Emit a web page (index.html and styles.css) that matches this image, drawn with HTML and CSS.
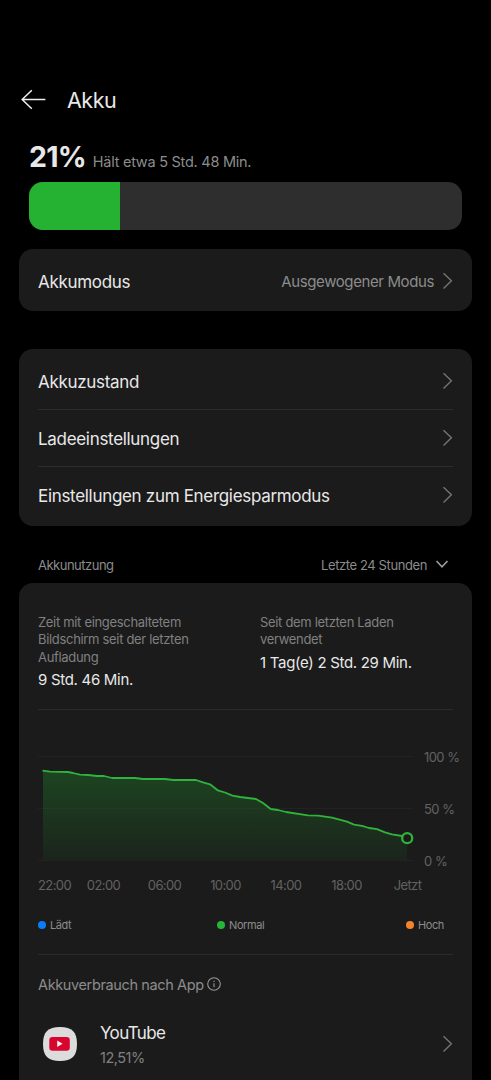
FILE: index.html
```html
<!DOCTYPE html>
<html lang="de">
<head>
  <meta charset="UTF-8" />
  <meta name="viewport" content="width=device-width, initial-scale=1.0"/>
  <title>Akku</title>
  <link rel="stylesheet" href="styles.css">
</head>
<body>
  <svg width="0" height="0" class="defs">
    <symbol id="chevron" viewBox="0 0 12 18">
      <path d="M2.5 1.2 L10.4 8.8 L2.5 16.4" fill="none" stroke="#747474" stroke-width="1.4"/>
    </symbol>
  </svg>

  <header class="header">
    <svg class="back" width="26" height="22" viewBox="0 0 26 22" fill="none" stroke="#eee" stroke-width="1.5">
      <path d="M11.8 1.3 L2.2 10.5 L11.8 19.7 M2.2 10.5 H25.4"/>
    </svg>
    <h1 class="title">Akku</h1>
  </header>

  <section class="level">
    <div class="level-text">
      <span class="percent">21%</span>
      <span class="remaining">Hält etwa 5 Std. 48 Min.</span>
    </div>
    <div class="bar"><div class="bar-fill" style="width: 21%"></div></div>
  </section>

  <section class="card mode">
    <div class="row">
      <span class="label">Akkumodus</span>
      <span class="value">Ausgewogener Modus</span>
      <svg class="chevron"><use href="#chevron"/></svg>
    </div>
  </section>

  <section class="card settings">
    <div class="row">
      <span class="label">Akkuzustand</span>
      <svg class="chevron"><use href="#chevron"/></svg>
    </div>
    <div class="row">
      <span class="label">Ladeeinstellungen</span>
      <svg class="chevron"><use href="#chevron"/></svg>
    </div>
    <div class="row">
      <span class="label">Einstellungen zum Energiesparmodus</span>
      <svg class="chevron"><use href="#chevron"/></svg>
    </div>
  </section>

  <div class="usage-head">
    <span class="usage-title">Akkunutzung</span>
    <span class="usage-range">Letzte 24 Stunden</span>
    <svg width="14" height="10" viewBox="0 0 14 10" fill="none" stroke="#9a9a9a" stroke-width="1.7">
      <path d="M1.5 1 L7 6.8 L12.5 1"/>
    </svg>
  </div>

  <section class="card usage">
    <div class="stats">
      <div class="stat">
        <p class="stat-label">Zeit mit eingeschaltetem<br>Bildschirm seit der letzten<br>Aufladung</p>
        <p class="stat-value">9 Std. 46 Min.</p>
      </div>
      <div class="stat">
        <p class="stat-label">Seit dem letzten Laden<br>verwendet</p>
        <p class="stat-value">1 Tag(e) 2 Std. 29 Min.</p>
      </div>
    </div>

    <div class="chart">
      <svg width="380" height="116" viewBox="38 750 380 116">
        <defs>
          <linearGradient id="fade" x1="0" y1="770" x2="0" y2="860" gradientUnits="userSpaceOnUse">
            <stop offset="0" stop-color="#20b030" stop-opacity="0.28"/>
            <stop offset="1" stop-color="#20b030" stop-opacity="0.06"/>
          </linearGradient>
        </defs>
        <path d="M38 756.5 H413 M38 808.5 H413 M38 860.5 H413" stroke="#222"/>
        <path fill="url(#fade)" d="M43 770.7 L50 771.7 L68 772 L73 773 L80 774.7 L88 775 L97 776 L104 776 L112 778 L135 778 L143 779 L165 779 L173 780 L196 780 L203 782.3 L210 784.3 L217.7 790.3 L225 792.5 L232.5 795.7 L240 797 L256 799 L263 803 L270.7 809 L278 810 L286 812 L308 815.3 L318 815.7 L332 817.7 L347 821.7 L354 824.7 L362 825.8 L369 828 L377 829.2 L385 832.3 L392 834.3 L402 836 L407 838 V860 H43 Z"/>
        <path fill="none" stroke="#2fb33c" stroke-width="1.8" stroke-linejoin="round" d="M42.5 770.7 L50 771.7 L68 772 L73 773 L80 774.7 L88 775 L97 776 L104 776 L112 778 L135 778 L143 779 L165 779 L173 780 L196 780 L203 782.3 L210 784.3 L217.7 790.3 L225 792.5 L232.5 795.7 L240 797 L256 799 L263 803 L270.7 809 L278 810 L286 812 L308 815.3 L318 815.7 L332 817.7 L347 821.7 L354 824.7 L362 825.8 L369 828 L377 829.2 L385 832.3 L392 834.3 L402 836"/>
        <circle cx="407.2" cy="838.2" r="5" fill="#1b1b1b" stroke="#2fb33c" stroke-width="2.3"/>
      </svg>
      <div class="y-axis">
        <span>100 %</span>
        <span>50 %</span>
        <span>0 %</span>
      </div>
    </div>
    <div class="x-axis">
      <span>22:00</span>
      <span>02:00</span>
      <span>06:00</span>
      <span>10:00</span>
      <span>14:00</span>
      <span>18:00</span>
      <span>Jetzt</span>
    </div>

    <div class="legend">
      <span class="key"><i class="dot blue"></i>Lädt</span>
      <span class="key normal"><i class="dot green"></i>Normal</span>
      <span class="key"><i class="dot orange"></i>Hoch</span>
    </div>

    <div class="apps-head">
      <span>Akkuverbrauch nach App</span>
      <svg width="14" height="14" viewBox="0 0 14 14" fill="none" stroke="#999" stroke-width="1.1">
        <circle cx="7" cy="7" r="6.3"/>
        <path d="M7 6.2 V10.2 M7 3.8 V5"/>
      </svg>
    </div>

    <div class="app">
      <svg width="34" height="34" viewBox="0 0 34 34">
        <path d="M17 0 C29 0 34 5 34 17 C34 29 29 34 17 34 C5 34 0 29 0 17 C0 5 5 0 17 0 Z" fill="#dcdcdc"/>
        <rect x="6.3" y="10" width="20.5" height="13.8" rx="3.2" fill="#d9052f"/>
        <path d="M14.2 13.6 L19.6 16.8 L14.2 20 Z" fill="#eee"/>
      </svg>
      <div class="app-text">
        <div class="app-name">YouTube</div>
        <div class="app-share">12,51%</div>
      </div>
      <svg class="chevron"><use href="#chevron"/></svg>
    </div>
  </section>
</body>
</html>
```

FILE: styles.css
```css
* {
  box-sizing: border-box;
}
body {
  margin: 0;
  height: 1080px;
  overflow: hidden;
  padding: 0 19px;
  background-color: #000;
  color: #e8e8e8;
  font-family: Inter, "Liberation Sans", sans-serif;
}
p, h1 {
  margin: 0;
}
span {
  white-space: nowrap;
}
.defs {
  display: block;
}
.header {
  display: flex;
  align-items: center;
  gap: 21px;
  height: 30px;
  margin-top: 85px;
  padding-left: 1px;
}
.back {
  margin-top: -1px;
}
.title {
  font-size: 21.5px;
  font-weight: 400;
  letter-spacing: -0.5px;
}
.level {
  padding: 0 10px;
}
.level-text {
  display: flex;
  align-items: baseline;
  gap: 7px;
  height: 67px;
  padding-top: 25px;
}
.percent {
  font-size: 28.5px;
  line-height: 34px;
  font-weight: 700;
  letter-spacing: -0.8px;
}
.remaining {
  font-size: 14.5px;
  letter-spacing: -0.26px;
  color: #8c8c8c;
}
.bar {
  height: 48px;
  border-radius: 14px;
  background-color: #2e2e2e;
  overflow: hidden;
}
.bar-fill {
  height: 100%;
  background-color: #25b233;
}
.card {
  border-radius: 14px;
  background-color: #1b1b1b;
  padding: 0 19px;
}
.mode {
  margin-top: 19px;
  padding-top: 2px;
  height: 62px;
}
.settings {
  margin-top: 38px;
  padding-top: 3px;
  height: 177px;
}
.row {
  display: flex;
  align-items: center;
  height: 57px;
}
.settings .row + .row {
  border-top: 1px solid #2d2d2d;
}
.mode .row {
  height: 60px;
}
.label {
  flex: 1;
  padding-top: 2px;
  font-size: 17px;
  letter-spacing: -0.31px;
}
.value {
  margin-right: 7px;
  font-size: 15px;
  letter-spacing: -0.39px;
  color: #8c8c8c;
}
.chevron {
  width: 12px;
  height: 18px;
  flex: none;
}
.usage-head {
  display: flex;
  align-items: center;
  height: 57px;
  padding: 21px 23px 0 19px;
  font-size: 13px;
  letter-spacing: -0.4px;
  color: #8c8c8c;
}
.usage-title {
  flex: 1;
  letter-spacing: -0.5px;
}
.usage-range {
  margin-right: 8px;
}
.usage {
  height: 520px;
  border-radius: 14px 14px 0 0;
}
.stats {
  display: grid;
  grid-template-columns: 222px 1fr;
  height: 127px;
  padding-top: 31px;
  border-bottom: 1px solid #2b2b2b;
}
.stat-label {
  font-size: 13px;
  line-height: 17.4px;
  letter-spacing: -0.32px;
  color: #808080;
}
.stat-value {
  margin-top: 4px;
  font-size: 15px;
  line-height: 20px;
  letter-spacing: -0.3px;
}
.chart {
  display: flex;
  gap: 6px;
  height: 116px;
  margin-top: 40px;
}
.chart svg {
  flex: none;
}
.y-axis {
  display: flex;
  flex-direction: column;
  justify-content: space-between;
  height: 120px;
  margin-top: -1px;
  font-size: 13px;
  line-height: 16px;
  letter-spacing: -0.6px;
  word-spacing: 0.3px;
  color: #626262;
}
.x-axis {
  display: grid;
  grid-template-columns: 37px 61px 61px 61px 60px 61px 61px;
  margin: 10px -10px 0 -2px;
  font-size: 13px;
  line-height: 18px;
  letter-spacing: -0.6px;
  color: #626262;
  text-align: center;
}
.legend {
  display: flex;
  justify-content: space-between;
  height: 61px;
  padding: 22px 9px 0 0;
  border-bottom: 1px solid #2b2b2b;
  font-size: 11px;
  line-height: 18px;
  letter-spacing: -0.4px;
  color: #8c8c8c;
}
.key {
  display: flex;
  align-items: center;
  height: 18px;
}
.normal {
  margin-left: 4px;
}
.dot {
  width: 8px;
  height: 8px;
  margin-right: 4px;
  border-radius: 50%;
}
.blue {
  background-color: #0a7cf5;
}
.green {
  background-color: #27b43a;
}
.orange {
  background-color: #f5832a;
}
.apps-head {
  display: flex;
  align-items: center;
  gap: 3px;
  margin-top: 19px;
  height: 20px;
  font-size: 14.5px;
  letter-spacing: -0.37px;
  color: #8c8c8c;
}
.app {
  display: flex;
  align-items: center;
  margin-top: 24px;
  padding-left: 5px;
}
.app-text {
  flex: 1;
  padding: 3px 0 0 23px;
}
.app-name {
  font-size: 17px;
  line-height: 24px;
  letter-spacing: -0.65px;
}
.app-share {
  font-size: 14.5px;
  line-height: 25px;
  letter-spacing: -0.5px;
  color: #808080;
}
```
